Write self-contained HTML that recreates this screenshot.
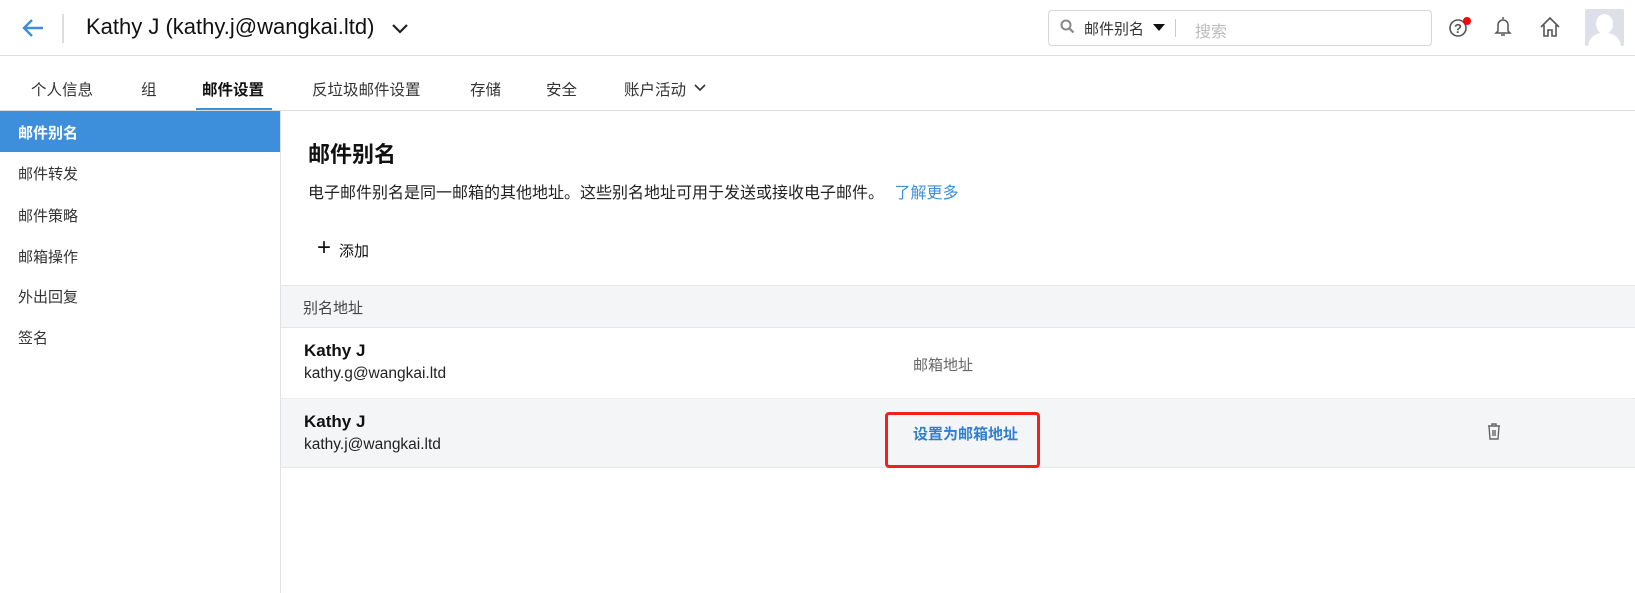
<!DOCTYPE html>
<html><head><meta charset="utf-8"><style>
*{margin:0;padding:0;box-sizing:border-box}
body{width:1635px;height:593px;background:#fff;font-family:"Liberation Sans","Noto Sans CJK SC",sans-serif;color:#222;position:relative;overflow:hidden}
.a{position:absolute;white-space:nowrap}
.t{top:78px;font-size:15.5px;color:#333}
</style></head><body>
<svg class="a" style="left:21px;top:17px" width="24" height="22" viewBox="0 0 24 22"><path d="M22 11H3M11 3L3 11l8 8" fill="none" stroke="#3d8fdc" stroke-width="2.4"/></svg>
<div class="a" style="left:62px;top:14px;width:2px;height:29px;background:#ddd"></div>
<div class="a" style="left:86px;top:14px;font-size:22px;color:#111">Kathy J (kathy.j@wangkai.ltd)</div>
<svg class="a" style="left:391px;top:23px" width="18" height="12" viewBox="0 0 18 12"><path d="M2 2l7 7 7-7" fill="none" stroke="#222" stroke-width="2.2"/></svg>
<div class="a" style="left:1048px;top:10px;width:384px;height:36px;border:1px solid #d8d8d8;border-radius:4px"></div>
<svg class="a" style="left:1060px;top:19px" width="15" height="16" viewBox="0 0 15 16"><circle cx="6" cy="6" r="4.5" fill="none" stroke="#888" stroke-width="2"/><path d="M9.5 9.5l4 4" stroke="#888" stroke-width="2.2"/></svg>
<div class="a" style="left:1084px;top:18px;font-size:15px;color:#333">邮件别名</div>
<div class="a" style="left:1153px;top:24px;width:0;height:0;border-left:6px solid transparent;border-right:6px solid transparent;border-top:7px solid #111"></div>
<div class="a" style="left:1175px;top:19px;width:1px;height:18px;background:#ccc"></div>
<div class="a" style="left:1195px;top:18px;font-size:16px;color:#bbb">搜索</div>
<svg class="a" style="left:1448px;top:17px" width="24" height="22" viewBox="0 0 24 22"><circle cx="10" cy="11" r="8" fill="none" stroke="#555" stroke-width="1.6"/><text x="10" y="16" text-anchor="middle" font-size="13" font-weight="bold" fill="#555" font-family="Liberation Sans">?</text><circle cx="19" cy="4" r="4" fill="#f00"/></svg>
<svg class="a" style="left:1494px;top:15px" width="18" height="24" viewBox="0 0 18 24"><path d="M9 2v2M4 16V10a5 5 0 0110 0v6l2 2H2z M7 20h4" fill="none" stroke="#555" stroke-width="1.5"/></svg>
<svg class="a" style="left:1539px;top:16px" width="22" height="22" viewBox="0 0 22 22"><path d="M2 11L11 2l9 9M5 9v11h4v-6h4v6h4V9" fill="none" stroke="#555" stroke-width="1.6"/></svg>
<div class="a" style="left:1585px;top:9px;width:39px;height:37px;background:#dde0e8;overflow:hidden;border-radius:2px"><div style="position:absolute;left:11px;top:5px;width:17px;height:20px;border-radius:50%;background:#fff"></div><div style="position:absolute;left:3px;top:24px;width:33px;height:20px;border-radius:14px 14px 0 0;background:#fff"></div></div>
<div class="a" style="left:0;top:55px;width:1635px;height:1px;background:#ddd"></div>
<div class="a t" style="left:31px">个人信息</div>
<div class="a t" style="left:141px">组</div>
<div class="a t" style="left:202px;color:#111;font-weight:bold">邮件设置</div>
<div class="a" style="left:196px;top:108px;width:76px;height:3px;background:#3d8fdc"></div>
<div class="a t" style="left:312px">反垃圾邮件设置</div>
<div class="a t" style="left:470px">存储</div>
<div class="a t" style="left:546px">安全</div>
<div class="a t" style="left:624px">账户活动</div>
<svg class="a" style="left:694px;top:84px" width="12" height="8" viewBox="0 0 12 8"><path d="M1 1l5 5 5-5" fill="none" stroke="#333" stroke-width="1.6"/></svg>
<div class="a" style="left:0;top:110px;width:1635px;height:1px;background:#ddd"></div>
<div class="a" style="left:280px;top:111px;width:1px;height:482px;background:#e2e2e2"></div>
<div class="a" style="left:0;top:111px;width:280px;height:41px;background:#3d8fdc"></div>
<div class="a" style="left:18px;top:122px;font-size:15px;color:#fff;font-weight:bold">邮件别名</div>
<div class="a" style="left:18px;top:163px;font-size:15px;color:#333">邮件转发</div>
<div class="a" style="left:18px;top:205px;font-size:15px;color:#333">邮件策略</div>
<div class="a" style="left:18px;top:246px;font-size:15px;color:#333">邮箱操作</div>
<div class="a" style="left:18px;top:286px;font-size:15px;color:#333">外出回复</div>
<div class="a" style="left:18px;top:327px;font-size:15px;color:#333">签名</div>
<div class="a" style="left:308px;top:137px;font-size:22px;font-weight:bold;color:#111">邮件别名</div>
<div class="a" style="left:308px;top:179px;font-size:16px;color:#222">电子邮件别名是同一邮箱的其他地址。这些别名地址可用于发送或接收电子邮件。 <span style="color:#3d8fdc;margin-left:6px">了解更多</span></div>
<div class="a" style="left:317px;top:236px;font-size:24px;color:#111;line-height:24px">+</div>
<div class="a" style="left:339px;top:240px;font-size:15px;color:#111">添加</div>
<div class="a" style="left:281px;top:285px;width:1354px;height:43px;background:#f4f5f7;border-top:1px solid #e6e6e6;border-bottom:1px solid #e6e6e6"></div>
<div class="a" style="left:303px;top:297px;font-size:15px;color:#444">别名地址</div>
<div class="a" style="left:304px;top:341px;font-size:17px;font-weight:bold;color:#111">Kathy J</div>
<div class="a" style="left:304px;top:365px;font-size:15.5px;color:#222">kathy.g@wangkai.ltd</div>
<div class="a" style="left:913px;top:354px;font-size:15px;color:#666">邮箱地址</div>
<div class="a" style="left:281px;top:398px;width:1354px;height:70px;background:#f4f5f7;border-top:1px dotted #e4e4e4;border-bottom:1px solid #e6e6e6"></div>
<div class="a" style="left:304px;top:412px;font-size:17px;font-weight:bold;color:#111">Kathy J</div>
<div class="a" style="left:304px;top:436px;font-size:15.5px;color:#222">kathy.j@wangkai.ltd</div>
<div class="a" style="left:885px;top:412px;width:155px;height:56px;border:3px solid #f0211c;border-radius:4px"></div>
<div class="a" style="left:913px;top:423px;font-size:15px;font-weight:bold;color:#2f7fd0">设置为邮箱地址</div>
<svg class="a" style="left:1486px;top:422px" width="16" height="18" viewBox="0 0 16 18"><path d="M2 4h12M6 4V2h4v2M3 4l1 13h8l1-13M7 8v6M9 8v6" fill="none" stroke="#666" stroke-width="1.4"/></svg>
</body></html>
